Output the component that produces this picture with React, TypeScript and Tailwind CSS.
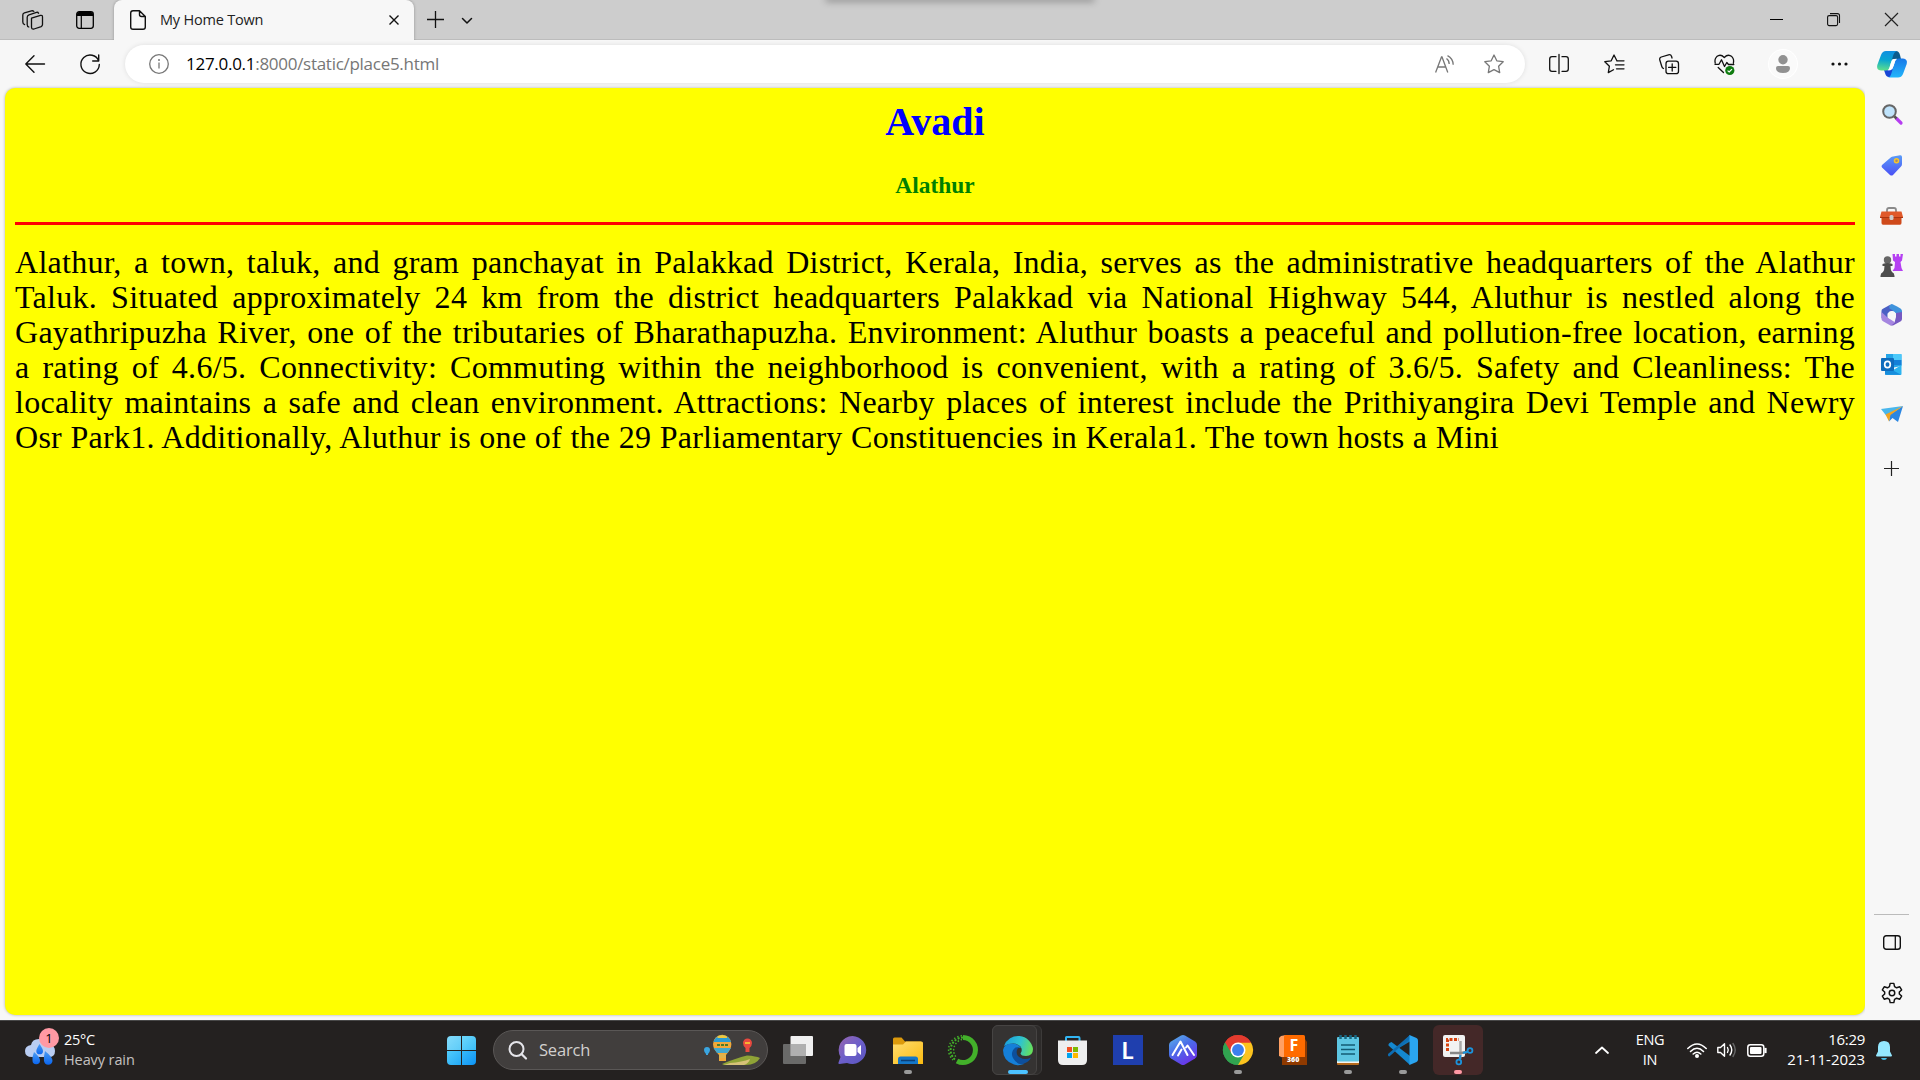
import React from "react";

type BoxProps = { w: number; h: number; vb?: string; className?: string; children: React.ReactNode };

function Svg({ w, h, vb, className, children }: BoxProps) {
  return (
    <svg
      width={w}
      height={h}
      viewBox={vb ?? `0 0 ${w} ${h}`}
      fill="none"
      stroke="none"
      className={"block shrink-0 overflow-visible " + (className ?? "")}
    >
      {children}
    </svg>
  );
}

const line = { stroke: "#111", strokeWidth: 1.3, strokeLinecap: "round" as const, strokeLinejoin: "round" as const };
const STAR = "M10 1 L12.8 6.8 L19.2 7.7 L14.6 12.2 L15.7 18.6 L10 15.6 L4.3 18.6 L5.4 12.2 L0.8 7.7 L7.2 6.8 Z";

function TabStrip() {
  return (
    <div className="relative flex h-10 shrink-0 items-stretch border-b border-[#bcbcbc] bg-[#cdcdcd]">
      <div className="absolute left-[826px] top-[-4px] h-1 w-[268px] rounded-full shadow-[0_1px_7px_1px_rgba(0,0,0,0.28)]" />
      <div className="flex w-[114px] items-center pl-[22px]">
        <Svg w={22} h={20}>
          <g {...line}>
            <path d="M9.5 8.2 L18.5 5.4 Q20.5 5 20.5 7 V14.6 Q20.5 16 19.2 16.6 L12 19 Q9.5 19.5 9.5 17 Z" />
            <path d="M6.8 17 Q5.2 16.5 5.2 14.5 V7.2 Q5.2 5.5 7 4.8 L14.5 2.3 Q16 2 16.6 3.2" />
            <path d="M2.6 14.6 Q.8 14 .8 12 V4.9 Q.8 3.4 2.4 2.8 L9.5 .8 Q11 .5 11.8 1.4" />
          </g>
        </Svg>
        <Svg w={18} h={18} className="ml-8">
          <rect x=".7" y=".7" width="16.6" height="16.6" rx="2.5" stroke="#000" strokeWidth="1.3" />
          <path d="M1 5V3Q1 1 3 1H15Q17 1 17 3V5Z" fill="#000" />
          <path d="M5.3 5V17" stroke="#000" strokeWidth="1.2" />
        </Svg>
      </div>
      <div className="-mb-px flex w-[300px] items-center rounded-t-lg bg-[#f7f7f7] pl-4 shadow-[0_0_3px_rgba(0,0,0,0.3)] [clip-path:inset(-4px_-4px_0_-4px)]">
        <Svg w={16} h={20}>
          <path d="M3 .7H9.5L15.3 6.5V17Q15.3 19.3 13 19.3H3Q.7 19.3 .7 17V3Q.7 .7 3 .7ZM9.5 .9V4.5Q9.5 6.5 11.5 6.5H15" {...line} strokeWidth={1.4} />
        </Svg>
        <span className="ml-3.5 w-[222px] whitespace-nowrap font-['Open_Sans'] text-[14.5px] tracking-[-0.2px] text-[#222]">My Home Town</span>
        <Svg w={10} h={10} className="ml-[7px]">
          <path d="M.5 .5L9.5 9.5M9.5 .5L.5 9.5" stroke="#111" strokeWidth="1.4" />
        </Svg>
      </div>
      <div className="flex grow items-center pl-[13px]">
        <Svg w={17} h={17}>
          <path d="M8.5 0V17M0 8.5H17" stroke="#111" strokeWidth="1.3" />
        </Svg>
        <Svg w={10} h={6} className="ml-[18px] mt-0.5">
          <path d="M.5 .5L5 5L9.5 .5" {...line} strokeWidth={1.5} />
        </Svg>
      </div>
      <div className="flex items-center pr-[22px]">
        <div className="h-px w-[13px] bg-black" />
        <Svg w={13} h={13} className="ml-11">
          <rect x=".6" y="2.6" width="10" height="10" rx="1.5" stroke="#111" strokeWidth="1.1" />
          <path d="M3 .6H10.4Q12.5 .6 12.5 2.6V10" stroke="#111" strokeWidth="1.1" />
        </Svg>
        <Svg w={13} h={13} className="ml-[45px]">
          <path d="M0 0L13 13M13 0L0 13" stroke="#222" strokeWidth="1.2" />
        </Svg>
      </div>
    </div>
  );
}

function Copilot() {
  return (
    <Svg w={30} h={27}>
      <defs>
        <linearGradient id="cpa" x1=".4" y1="0" x2=".3" y2="1">
          <stop stopColor="#0f8fe0" />
          <stop offset=".45" stopColor="#08a5d2" />
          <stop offset="1" stopColor="#5fe08b" />
        </linearGradient>
        <linearGradient id="cpb" x1="0" y1="0" x2="0" y2="1">
          <stop stopColor="#1878e8" />
          <stop offset="1" stopColor="#22b5fa" />
        </linearGradient>
      </defs>
      <path d="M15 0H19Q22 0 23 4L24 8H17Q14 8 13 12Z" fill="#0d5c8e" />
      <path d="M7 19H13L18 14L15 26H12Q9 26 8 22Z" fill="#1746d6" />
      <path d="M9 0H20Q17 1 16 5L12.500 17Q11.500 19.500 9 19.500H4Q-1 19 .3 14L4 4Q5.500 0 9 0Z" fill="url(#cpa)" />
      <path d="M22 7.500H26Q31 8 29.700 13L26 23Q24.500 26.500 21 26.500H11Q13.500 26 14.500 22L18 10.500Q19 7.500 22 7.500Z" fill="url(#cpb)" />
      <path d="M17 8Q14.500 9 13.800 12L12.300 17Q11.500 19.500 10 19.500Q14 19.500 15.500 18L18 10.500Q18.500 8.500 20 7.800Z" fill="#fff" />
    </Svg>
  );
}

function Toolbar() {
  return (
    <div className="flex h-12 shrink-0 items-center bg-[#f7f7f7] pl-[25px]">
      <Svg w={20} h={18}>
        <path d="M19.500 9H.8M9 .8L.8 9L9 17.200" {...line} strokeWidth={1.4} />
      </Svg>
      <Svg w={20} h={20} className="ml-[35px]">
        <path d="M18.700 7A9.200 9.200 0 1 0 19.300 10.500M18.700 1V7H12.700" {...line} strokeWidth={1.4} />
      </Svg>
      <div className="ml-[25px] flex h-[38px] w-[1400px] items-center rounded-full bg-white pl-[22px] shadow-[0_0_5px_rgba(0,0,0,0.1)]">
        <Svg w={20} h={20} className="ml-0.5">
          <circle cx="10" cy="10" r="9.300" stroke="#777" strokeWidth="1.300" />
          <path d="M10 8.500V14.500" stroke="#777" strokeWidth="1.300" />
          <circle cx="10" cy="6" r="1" fill="#777" />
        </Svg>
        <span className="ml-[17px] w-[1249px] whitespace-nowrap font-['Open_Sans'] text-[17px] tracking-[-0.28px] text-[#767676]">
          <span className="text-black">127.0.0.1</span>:8000/static/place5.html
        </span>
        <Svg w={19} h={18}>
          <path d="M.6 17.400L6.500 2H7L12.800 17.400M2.800 12H10.700" stroke="#777" strokeWidth="1.300" />
          <path d="M11.500 3.500Q14.200 5.500 14.200 9M12.500 .7Q18 3.500 18.200 9.800" stroke="#777" strokeWidth="1.300" />
        </Svg>
        <Svg w={20} h={20} className="ml-[30px]">
          <path d={STAR} stroke="#777" strokeWidth="1.300" strokeLinejoin="round" />
        </Svg>
      </div>
      <Svg w={20} h={20} className="ml-6">
        <path d="M7 2.700H3Q.7 2.700 .7 5V15Q.7 17.300 3 17.300H7M13 2.700H17Q19.300 2.700 19.300 5V15Q19.300 17.300 17 17.300H13M10 .5V19.500" {...line} />
      </Svg>
      <Svg w={21} h={20} className="ml-[35px]">
        <path d="M13 7L10 1L7.200 6.800L.8 7.700L5.400 12.200L4.300 18.600L9.500 15.800M13.500 6.800H20M11.500 10.800H20M12.500 14.800H20" {...line} />
      </Svg>
      <Svg w={21} h={21} className="ml-[34px]">
        <rect x="7" y="7.200" width="12.500" height="12.500" rx="2.500" {...line} />
        <path d="M13.200 9.800V17M9.600 13.400H16.800M4.500 14.500Q3.200 14 2.800 12.500L.8 6Q.2 3.800 2.300 3L9.500 .8Q11.800 .2 12.600 2.500L13 4" {...line} />
      </Svg>
      <Svg w={21} h={21} className="ml-[34px]">
        <path d="M1.200 9Q.3 5 2.800 2.600Q6.500 -.5 10.300 3.500Q14 -.5 17.800 2.600Q20.300 5 19.400 9M1 10.300H5L7.500 5.800L10.500 12.500L12.800 8.500L14.500 10.500H19.800M4.200 13.500L9.500 18.500" {...line} />
        <circle cx="15.800" cy="16.500" r="4.600" fill="#107c10" />
        <path d="M13.600 16.600L15.200 18L18 15.200" stroke="#fff" strokeWidth="1.200" />
      </Svg>
      <div className="ml-[34px] flex size-7 items-center justify-center rounded-full bg-[#fafafa] ring-1 ring-white">
        <Svg w={14} h={18}>
          <circle cx="7" cy="4.800" r="4.700" fill="#919191" />
          <path d="M2 11H12Q14 11 14 13Q14 18 7 18Q0 18 0 13Q0 11 2 11Z" fill="#919191" />
        </Svg>
      </div>
      <Svg w={17} h={4} className="ml-[34px]">
        <circle cx="2" cy="2" r="1.600" fill="#111" />
        <circle cx="8.500" cy="2" r="1.600" fill="#111" />
        <circle cx="15" cy="2" r="1.600" fill="#111" />
      </Svg>
      <div className="ml-[29px]">
        <Copilot />
      </div>
    </div>
  );
}

const LINES = [
  "Alathur, a town, taluk, and gram panchayat in Palakkad District, Kerala, India, serves as the administrative headquarters of the Alathur",
  "Taluk. Situated approximately 24 km from the district headquarters Palakkad via National Highway 544, Aluthur is nestled along the",
  "Gayathripuzha River, one of the tributaries of Bharathapuzha. Environment: Aluthur boasts a peaceful and pollution-free location, earning",
  "a rating of 4.6/5. Connectivity: Commuting within the neighborhood is convenient, with a rating of 3.6/5. Safety and Cleanliness: The",
  "locality maintains a safe and clean environment. Attractions: Nearby places of interest include the Prithiyangira Devi Temple and Newry",
];

function Page() {
  return (
    <main className="ml-[5px] h-[927px] w-[1860px] rounded-[10px] bg-[#ffff00] px-2.5 font-['Liberation_Serif'] shadow-[0_0_3px_rgba(0,0,0,0.3)]">
      <h1 className="pt-[11px] text-center text-[40px] font-bold leading-[46px] text-[#0000ff]">Avadi</h1>
      <h3 className="mt-[27px] text-center text-[23.4px] font-bold leading-[26px] text-[#008000]">Alathur</h3>
      <hr className="mt-6 h-[3px] border-0 bg-[#ff0000]" />
      <div className="mt-5 text-[32px] leading-[35px] tracking-[0.27px] text-black">
        {LINES.map((l) => (
          <p key={l} className="whitespace-nowrap [text-align-last:justify]">{l}</p>
        ))}
        <p className="w-[1484px] whitespace-nowrap [text-align-last:justify]">
          Osr Park1. Additionally, Aluthur is one of the 29 Parliamentary Constituencies in Kerala1. The town hosts a Mini
        </p>
      </div>
    </main>
  );
}

function Sidebar() {
  return (
    <aside className="flex grow flex-col items-center bg-[#f7f7f7] pb-4 pr-0.5 pt-4">
      <Svg w={20} h={20}>
        <path d="M14.500 14.500L19 19" stroke="#b53df0" strokeWidth="3.200" strokeLinecap="round" />
        <path d="M12 12L14.500 14.500" stroke="#555" strokeWidth="2.500" />
        <circle cx="7.500" cy="7.500" r="6.300" fill="#bfe3fb" stroke="#666" strokeWidth="2" />
      </Svg>
      <Svg w={22} h={21} className="mt-[31px]">
        <defs>
          <linearGradient id="tag" x1="0" y1="0" x2="0" y2="1">
            <stop stopColor="#5a9cf8" />
            <stop offset="1" stopColor="#4a50f5" />
          </linearGradient>
        </defs>
        <path d="M12 1.500L19 .3Q21 0 21 2V9Q21 10.500 20 11.500L12 20Q10.500 21 9 20L1 12.500Q0 11 1 10L10 2.300Q11 1.700 12 1.500Z" fill="url(#tag)" />
        <circle cx="15.500" cy="5.700" r="2" stroke="#f7c52b" strokeWidth="1.500" fill="#a58a70" />
      </Svg>
      <Svg w={23} h={18} className="mt-[31px]">
        <path d="M7 5V3Q7 1 9 1H14Q16 1 16 3V5" stroke="#8a8a8a" strokeWidth="1.800" />
        <path d="M1.500 9H21.500V16Q21.500 17.800 20 17.800H3Q1.500 17.800 1.500 16Z" fill="#cf4a1b" />
        <path d="M1.500 4.500H21.500L23 10H0Z" fill="#e0592a" />
        <path d="M0 10H23V11H0Z" fill="#ac3510" />
        <rect x="9.500" y="8" width="4" height="5" rx="1.500" fill="#ccc" />
      </Svg>
      <Svg w={23} h={23} className="mt-[29px]">
        <path d="M12.500 0H15V2.500H16.500V0H19V2.500H20.500V0H23L22 6.500L20.500 8L21.500 14L23 17H12.500L14.500 14L15 8L13 6.500Z" fill="#b540f2" />
        <circle cx="7.500" cy="6" r="3.700" fill="#666" />
        <path d="M2.500 10Q7.500 8 12.500 10V12H10.500Q10.500 16 12 18Q14.500 19 14.500 22V23H.5V22Q.5 19 3 18Q4.500 16 4.500 12H2.500Z" fill="#4d4d4d" />
      </Svg>
      <Svg w={22} h={22} className="mt-[27px]">
        <path d="M10.500 0Q12 0 19.500 4.500Q21 5.500 21 7V13L14.500 9L8.500 5.500Q6 3 10.500 0Z" fill="#3f93dc" />
        <path d="M10.500 0L1.500 5Q.5 5.700 .5 7V14L6.500 17V9.500L12 6.500L8.500 4.500Q7.500 2 10.500 0Z" fill="#4a5fc4" />
        <path d="M21 8V15Q21 16.500 19.800 17.200L12.500 21.300Q10.500 22 9 21L13.500 18.500L15 13V9Z" fill="#7659c2" />
        <path d="M.5 8V15Q.5 16.500 2 17.200L9 21.300Q12 21.500 13.500 18L6.500 13.500Z" fill="#a586e0" />
        <circle cx="10.800" cy="11" r="3.900" fill="#f7f7f7" />
      </Svg>
      <Svg w={21} h={21} className="mt-[28px]">
        <path d="M5 0H19.500Q20.500 0 20.500 1V12L5 15Z" fill="#25a5e8" />
        <path d="M12 0H20.500V6H12Z" fill="#4cc9fa" />
        <path d="M12 6H20.500V11H12Z" fill="#1480d8" />
        <path d="M4 21L20.500 11V20Q20.500 21 19.500 21Z" fill="#2cb4f0" />
        <path d="M4 12L20 20.800H4Z" fill="#178ddc" />
        <rect x="0" y="4" width="13" height="13" rx="1" fill="#0f6cbd" />
        <ellipse cx="6.500" cy="10.500" rx="2.800" ry="3.200" stroke="#fff" strokeWidth="1.700" />
      </Svg>
      <Svg w={22} h={16} className="mt-[31px]">
        <path d="M0 3L22 0L8 8.500L5.500 10Z" fill="#49b6ec" />
        <path d="M22 0L17 16L11.500 12L8 15.500L9 8.500Z" fill="#2a86e2" />
        <path d="M22 0L9.500 9L8 15.500L4.500 8.500Z" fill="#f0a422" />
      </Svg>
      <Svg w={15} h={15} className="mt-[39px]">
        <path d="M7.500 0V15M0 7.500H15" stroke="#222" strokeWidth="1.200" />
      </Svg>
      <div className="mt-auto h-px w-[35px] bg-[#bbb]" />
      <Svg w={18} h={15} className="mt-5">
        <rect x=".7" y=".7" width="16.600" height="13.600" rx="2.500" {...line} strokeWidth={1.400} />
        <path d="M12.300 1V14" {...line} />
      </Svg>
      <Svg w={22} h={22} vb="0 0 24 24" className="mt-8">
        <path
          d="M10 1.500H14L14.800 5L17 6.300L20.500 5.200L22.500 8.700L20 11V13L22.500 15.300L20.500 18.800L17 17.700L14.800 19L14 22.500H10L9.200 19L7 17.700L3.500 18.800L1.500 15.300L4 13V11L1.500 8.700L3.500 5.200L7 6.300L9.200 5Z"
          {...line}
          strokeWidth={1.600}
        />
        <circle cx="12" cy="12" r="3" {...line} strokeWidth={1.600} />
      </Svg>
    </aside>
  );
}

function Slot({ children, mark }: { children: React.ReactNode; mark?: string }) {
  return (
    <div className="relative flex h-[50px] w-[55px] shrink-0 items-center justify-center">
      {children}
      {mark && <div className={"absolute bottom-[1px] h-1 rounded-full " + mark} />}
    </div>
  );
}

const GREY = "w-2 bg-[#9a9a9a]";

function Apps() {
  return (
    <>
      <Slot>
        <Svg w={30} h={28}>
          <rect x="7.500" y="0" width="22.500" height="20" rx="1" fill="#f0f0f0" />
          <rect x="0" y="8" width="23" height="20" rx="1" fill="#777" fillOpacity=".85" />
          <path d="M7.500 8H23V20H7.500Z" fill="#b0b0b0" />
        </Svg>
      </Slot>
      <Slot>
        <Svg w={29} h={28}>
          <defs>
            <linearGradient id="chat" x1="0" y1="0" x2="1" y2="1">
              <stop stopColor="#9a66ae" />
              <stop offset=".5" stopColor="#6c5fca" />
              <stop offset="1" stopColor="#5a55c0" />
            </linearGradient>
          </defs>
          <path d="M14.500 0A14 14 0 1 1 9 27L1.500 28Q0 28 .5 26.500L2.500 21A14 14 0 0 1 14.500 0Z" fill="url(#chat)" />
          <rect x="6.500" y="8" width="12" height="12" rx="2" fill="#fff" />
          <path d="M19.500 12L23 9V19L19.500 16Z" fill="#fff" />
        </Svg>
      </Slot>
      <Slot mark={GREY}>
        <Svg w={30} h={27}>
          <defs>
            <linearGradient id="fold" x1="0" y1="0" x2="1" y2="1">
              <stop stopColor="#ffdd70" />
              <stop offset="1" stopColor="#fbbb10" />
            </linearGradient>
          </defs>
          <path d="M0 2Q0 .5 1.500 .5H8.500L12 4.500H28V12H0Z" fill="#dc9a0c" />
          <path d="M0 7.500H10L13 4.500H28.500Q30 4.500 30 6V27H0Z" fill="url(#fold)" />
          <path d="M5 27V22Q5 19.500 7.500 19.500H22.500Q25 19.500 25 22V27Z" fill="#1577c8" />
          <path d="M8 23.500H22" stroke="#0b3f77" strokeWidth="1.500" />
        </Svg>
      </Slot>
      <Slot>
        <Svg w={30} h={30}>
          <path d="M15 2.500A12.500 12.500 0 1 1 9 26" stroke="#43b02a" strokeWidth="5" />
          <path d="M15 2.500A12.500 12.500 0 0 0 7 24.500" stroke="#43b02a" strokeWidth="2" strokeDasharray="2 1.500" />
          <path d="M14 .8A14 14 0 0 0 5 25" stroke="#43b02a" strokeWidth="1.500" strokeDasharray="1.500 2" />
          <path d="M14 4.500A11 11 0 0 0 8 22" stroke="#43b02a" strokeWidth="1.400" strokeDasharray="1.500 1.800" />
        </Svg>
      </Slot>
      <div className="relative flex h-[50px] w-[55px] shrink-0 justify-center">
        <div className="absolute left-0.5 top-0 h-[50px] w-[50px] rounded-md border border-[#3c3a39] bg-[#2d2b2a]" />
        <div className="absolute left-0.5 top-0 h-[50px] w-[45px] rounded-md border border-[#464443] bg-[#353332]" />
        <Svg w={30} h={30} className="relative mt-2.5">
          <defs>
            <linearGradient id="edg" x1="0" y1=".3" x2="1" y2=".5">
              <stop stopColor="#1a9fe0" />
              <stop offset=".55" stopColor="#2fc3cf" />
              <stop offset="1" stopColor="#66e05c" />
            </linearGradient>
          </defs>
          <path d="M1 11A15 15 0 0 1 30 14Q30 21 23 21Q18 21 17.500 18.500Q20 15 17.500 11.500Q12 6 1 11Z" fill="url(#edg)" />
          <path d="M0 15Q1 8.500 9 8.500Q15.500 8.500 18 13Q11 12 10 17Q9.500 26 21 29Q16 31 11 29.500Q0 26 0 15Z" fill="#157fd8" />
          <path d="M12.500 12.500Q7 17 10 23Q14 30 20 29Q26 27 28 22.500Q22 25.500 17 22.500Q12.500 19.500 14 15Q15 12 18 13Q16 12 12.500 12.500Z" fill="#0d4f9c" />
        </Svg>
        <div className="absolute bottom-[1px] h-1 w-5 rounded-full bg-[#4cc2ff]" />
      </div>
      <Slot>
        <Svg w={29} h={29}>
          <path d="M8 5V1.500Q8 1 8.500 1H20.500Q21.500 1 21.500 2V5" stroke="#32b5f2" strokeWidth="2" />
          <path d="M0 4.500H29V24Q29 29 24 29H5Q0 29 0 24Z" fill="#eee" />
          <path d="M9 11H14V16H9Z" fill="#f25022" />
          <path d="M15 11H20V16H15Z" fill="#7fba00" />
          <path d="M9 17H14V22H9Z" fill="#00a4ef" />
          <path d="M15 17H20V22H15Z" fill="#ffb900" />
        </Svg>
      </Slot>
      <Slot>
        <div className="flex size-[30px] items-center justify-center bg-[#1f3fae] font-['Lato'] text-[23px] font-bold leading-none text-white">L</div>
      </Slot>
      <Slot>
        <Svg w={28} h={30}>
          <defs>
            <linearGradient id="hex" x1="0" y1="0" x2=".6" y2="1">
              <stop stopColor="#5cb8ea" />
              <stop offset=".5" stopColor="#4a6ce8" />
              <stop offset="1" stopColor="#6a35e8" />
            </linearGradient>
          </defs>
          <path d="M12 .6Q14 -.4 16 .6L26 6.500Q28 7.700 28 10V20Q28 22.300 26 23.500L16 29.400Q14 30.400 12 29.400L2 23.500Q0 22.300 0 20V10Q0 7.700 2 6.500Z" fill="url(#hex)" />
          <path d="M3.500 20L11.500 6.500L18.500 20M9 20.500L12.500 14.500M17 12.500L18.500 10.500L25 20" stroke="#fff" strokeWidth="2" strokeLinejoin="round" strokeLinecap="round" />
        </Svg>
      </Slot>
      <Slot mark={GREY}>
        <Svg w={30} h={30} vb="0 0 48 48">
          <path d="M24 24L3.200 12A24 24 0 0 1 44.800 12Z" fill="#e33b2e" />
          <path d="M24 24L24 48A24 24 0 0 1 3.200 12Z" fill="#31a350" />
          <path d="M24 24L44.800 12A24 24 0 0 1 24 48Z" fill="#fcc31e" />
          <path d="M24 12H44.800L34.400 30L24 24Z" fill="#fcc31e" />
          <path d="M24 12H44.800A24 24 0 0 0 3.200 12L13.600 30Z" fill="#e33b2e" />
          <path d="M34.400 30L24 48A24 24 0 0 1 3.200 12L13.600 30Q24 40 34.400 30Z" fill="#31a350" />
          <circle cx="24" cy="24" r="12" fill="#fff" />
          <circle cx="24" cy="24" r="9.500" fill="#3d7fee" />
        </Svg>
      </Slot>
      <Slot>
        <div className="relative h-[30px] w-[28px]">
          <Svg w={28} h={30}>
            <path d="M2 1L7 0V24L0 21V3Z" fill="#ffa064" />
            <rect x="5" y="0" width="21" height="23" rx="1.500" fill="#ff6b00" />
            <path d="M26 4L28 7V30H3V22H26Z" fill="#8f3a00" />
          </Svg>
          <span className="absolute left-[11px] top-0 font-['Open_Sans'] text-[16px] font-bold leading-[21px] text-white">F</span>
          <span className="absolute left-[8.500px] top-[20px] font-['Open_Sans'] text-[7px] font-extrabold leading-[10px] text-white">360</span>
        </div>
      </Slot>
      <Slot mark={GREY}>
        <Svg w={22} h={30}>
          <rect x="0" y="3" width="22" height="27" rx="1" fill="#b5691c" />
          <rect x="0" y="3" width="22" height="25" fill="#f4f4f0" />
          <rect x="0" y="2" width="22" height="24.500" rx="1" fill="#5dc6e2" />
          <path d="M4 10H18M4 14.500H18M4 19H18" stroke="#135c74" strokeWidth="1.700" />
          <path d="M3.500 0V4M8.500 0V4M13.500 0V4M18.500 0V4" stroke="#176781" strokeWidth="2.500" />
        </Svg>
      </Slot>
      <Slot mark={GREY}>
        <Svg w={30} h={30}>
          <path d="M22 0L4.500 18.500L1 21.500Q0 20.500 0 19.500L22 6.500Z" fill="#0f77bd" />
          <path d="M3.500 7L22 21V30L.5 10.500Q0 9 1.500 8Z" fill="#1488d0" />
          <path d="M1 21.500L22 3.500V0L0 19Z" fill="#0e6db2" />
          <path d="M21.500 0L28.500 3Q30 3.700 30 5.500V24.500Q30 26.300 28.500 27L21.500 30V0Z" fill="#2aa5f0" />
        </Svg>
      </Slot>
      <div className="flex w-[55px] shrink-0 justify-center">
        <div className="relative flex h-[50px] w-[50px] justify-center rounded-md bg-[#442828] pt-2.5">
          <Svg w={30} h={30}>
            <rect x="0" y="0" width="22" height="22" rx="2" fill="#f2f2f2" />
            <path d="M4.500 16V4.500H16" stroke="#d8420e" strokeWidth="3" strokeDasharray="3 1.500" />
            <path d="M17.500 6V18L17 24" stroke="#aaa" strokeWidth="2.500" />
            <path d="M7 18H18L24 17" stroke="#888" strokeWidth="2.500" />
            <circle cx="27" cy="15.500" r="2.400" stroke="#1b93dc" strokeWidth="1.800" />
            <circle cx="15.800" cy="27" r="2.400" stroke="#1b93dc" strokeWidth="1.800" />
            <path d="M20 18L25 16.500M16.800 24.500L17.500 20" stroke="#1b93dc" strokeWidth="2" />
          </Svg>
          <div className="absolute bottom-[1px] h-1 w-2 rounded-full bg-[#ff99a4]" />
        </div>
      </div>
    </>
  );
}

function Taskbar() {
  return (
    <footer className="flex h-[60px] shrink-0 items-center border-t border-[#484848] bg-[#242120] pb-px font-['Open_Sans']">
      <div className="relative -mt-1 ml-[25px] h-[38px] w-[39px]">
        <Svg w={31} h={38}>
          <defs>
            <linearGradient id="drop" x1="0" y1="0" x2="0" y2="1">
              <stop stopColor="#4b9bf2" />
              <stop offset="1" stopColor="#0a66f0" />
            </linearGradient>
          </defs>
          <path d="M7 28Q0 28 0 22Q0 17 6 16Q7 10 14 10Q21 10 24 16Q30 16 30 22Q30 28 24 28Z" fill="#b9cdf2" />
          <path d="M14.500 15Q18 20 18 22A3.300 3.300 0 0 1 11.300 22Q11.300 20 14.500 15Z" fill="url(#drop)" />
          <path d="M9 23Q15 28 15 31.500A3.700 3.700 0 0 1 7.500 31.500Q7 28 9 23Z" fill="url(#drop)" />
          <path d="M20 22Q27.500 28 27.500 32A4.300 4.300 0 0 1 19 32Q18.500 28 20 22Z" fill="url(#drop)" />
        </Svg>
        <span className="absolute left-[14px] top-[-1px] flex size-5 items-center justify-center rounded-full bg-[#ff99a4] text-[13px] leading-none text-black">1</span>
      </div>
      <div className="-mt-px w-[383px] whitespace-nowrap text-[14.500px] leading-5">
        <div className="tracking-[-0.3px] text-white">25°C</div>
        <div className="tracking-[-0.1px] text-[#c4c2c0]">Heavy rain</div>
      </div>
      <div className="grid grid-cols-2 gap-px">
        <div className="size-[14px] rounded-tl-sm bg-linear-to-br from-[#83dcfb] to-[#5ccbf8]" />
        <div className="size-[14px] rounded-tr-sm bg-linear-to-br from-[#6cd8fb] to-[#38bdf8]" />
        <div className="size-[14px] rounded-bl-sm bg-linear-to-br from-[#50ccfb] to-[#22a9f5]" />
        <div className="size-[14px] rounded-br-sm bg-linear-to-br from-[#36b9f8] to-[#0a93f5]" />
      </div>
      <div className="ml-[17px] mr-[2px] flex h-10 w-[275px] shrink-0 items-center rounded-full border border-[#5a5756] bg-[#413e3d] pl-[14px]">
        <Svg w={19} h={19}>
          <circle cx="8.500" cy="8" r="7" stroke="#e5e5ea" strokeWidth="2" />
          <path d="M13.500 13L18 17.500" stroke="#e5e5ea" strokeWidth="2.200" strokeLinecap="round" />
        </Svg>
        <span className="ml-[12px] w-[165px] text-[16.500px] leading-5 tracking-[-0.2px] text-[#d2d0ce]">Search</span>
        <Svg w={57} h={32}>
          <path d="M0 16A3 3 0 0 1 6 16Q6 18 4 20V21H2V20Q0 18 0 16Z" fill="#3aa5e0" />
          <path d="M9 10A9.200 9.200 0 0 1 27.400 10Q27.400 15 22 21V27H15V21Q9 15 9 10Z" fill="#f1a93a" />
          <path d="M10.500 5.500A9.200 9.200 0 0 1 26 5.500L27 8H9.500Z" fill="#2b9bd2" />
          <path d="M13.500 2.500Q18 -.5 23 2.500V4H13.500Z" fill="#f0c73c" />
          <path d="M9.500 14H27L23.500 19H13Z" fill="#42a8cf" />
          <path d="M13 11H16M17 11H20M21 11H24" stroke="#4c7b2a" strokeWidth="2" />
          <path d="M15 20H22V24H15Z" fill="#dfb34c" />
          <path d="M39 9A4.500 4.500 0 0 1 48 9Q48 12 45.500 14V18H41.500V14Q39 12 39 9Z" fill="#e8493f" />
          <path d="M41 9H46" stroke="#f6b431" strokeWidth="2" />
          <path d="M18 30Q32 24 43 21.500Q52 22 56 24Q52 31 42 31H20Z" fill="#8fa336" />
          <path d="M26 29Q38 28 46 25Q45 29 40 31H20Z" fill="#d6c178" />
        </Svg>
      </div>
      <Apps />
      <div className="flex grow items-center pl-[110px] text-[15px] text-white">
        <Svg w={14} h={8}>
          <path d="M1 7L7 1.500L13 7" stroke="#fff" strokeWidth="1.800" strokeLinecap="round" strokeLinejoin="round" />
        </Svg>
        <div className="-mt-px ml-[25px] w-[32px] text-center text-[14.500px] leading-5 tracking-[-0.3px]">
          <div>ENG</div>
          <div>IN</div>
        </div>
        <Svg w={20} h={15} className="ml-[21px]">
          <g stroke="#fff" strokeWidth="1.600" strokeLinecap="round">
            <path d="M.8 5.500Q10 -3.500 19.200 5.500M3.500 8.500Q10 2 16.500 8.500M6.200 11Q10 7.500 13.800 11" />
          </g>
          <circle cx="10" cy="13" r="2" fill="#fff" />
        </Svg>
        <Svg w={20} h={16} className="ml-[10px]">
          <path d="M.8 5.500H3.500L7.500 1.800V14.200L3.500 10.500H.8Z" stroke="#fff" strokeWidth="1.400" strokeLinejoin="round" />
          <path d="M10.500 5.500Q12 8 10.500 10.500M13 3Q16.500 8 13 13" stroke="#fff" strokeWidth="1.400" strokeLinecap="round" />
          <path d="M16 1.500Q20.500 8 16 14.500" stroke="#666" strokeWidth="1.400" strokeLinecap="round" />
        </Svg>
        <Svg w={20} h={13} className="ml-[10px]">
          <rect x=".8" y=".8" width="16" height="11.400" rx="2.500" stroke="#fff" strokeWidth="1.500" />
          <rect x="3" y="3" width="11.500" height="7" rx="1" fill="#fff" />
          <path d="M18 4.500H19V8.500H18Z" stroke="#fff" strokeWidth="1.200" />
        </Svg>
        <div className="-mt-[3px] ml-[8px] w-[90px] whitespace-nowrap text-right text-[15px] leading-5">
          <div className="tracking-[-0.3px]">16:29</div>
          <div className="tracking-[-0.05px]">21-11-2023</div>
        </div>
        <Svg w={16} h={19} className="ml-[11px]">
          <path d="M8 0Q14 0 14 6V10.500L16 14.500Q16 15.500 15 15.500H1Q0 15.500 0 14.500L2 10.500V6Q2 0 8 0Z" fill="#94e8ff" />
          <path d="M5 17H11Q10.500 19 8 19Q5.500 19 5 17Z" fill="#45bfe8" />
        </Svg>
      </div>
    </footer>
  );
}

export default function App() {
  return (
    <div className="flex h-[1080px] w-[1920px] flex-col overflow-hidden bg-[#f7f7f7]">
      <TabStrip />
      <Toolbar />
      <div className="flex h-[932px] shrink-0">
        <Page />
        <Sidebar />
      </div>
      <Taskbar />
    </div>
  );
}
